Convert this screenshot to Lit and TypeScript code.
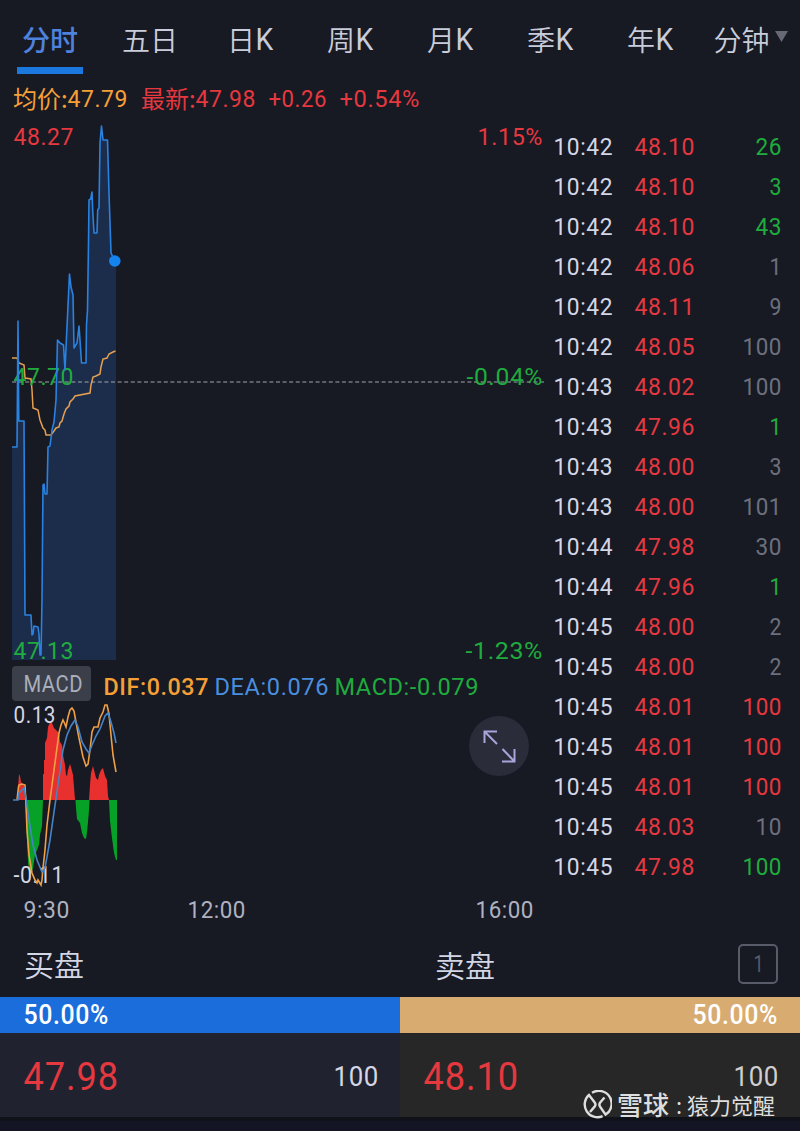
import { LitElement, html, svg, css } from "lit";
import { customElement, property } from "lit/decorators.js";

const CAP = 0.711;

/** Condensed numeric label whose box equals the visible glyph box. */
@customElement("din-text")
class DinText extends LitElement {
  @property() text = "";
  @property({ type: Number }) w = 0;
  @property({ type: Number }) cap = 17.5;
  @property({ type: Number }) weight = 450;

  static styles = css`
    :host { display: block; flex: none; }
    svg { display: block; overflow: visible; }
    text { font-family: Roboto, "Liberation Sans", sans-serif; fill: currentColor; letter-spacing: 0.025em; }
  `;

  render() {
    return html`<svg width=${this.w} height=${this.cap}>
      ${svg`<text x="-0.5" y=${this.cap} font-size=${this.cap / CAP} font-weight=${this.weight}
        textLength=${this.w + 1.5} lengthAdjust="spacingAndGlyphs">${this.text}</text>`}
    </svg>`;
  }
}

const label = (x: number, y: number, w: number, cls: string, text: string, size = 24.6) =>
  svg`<text class=${"lbl " + cls} x=${x - 0.5} y=${y} font-size=${size} textLength=${w + 1.5}
    lengthAdjust="spacingAndGlyphs">${text}</text>`;

const PRICE =
  "12,447 17,447 18,321 18.8,421 24,421 25,615 31,615 32,635 33,634 34,626 38,627 39,634 40,655 41,655 42,600 43,485 44,484 45,494 47,494 48,447 50,446 52,430 54,422 56,400 57.5,340 60,343 63.5,345 65,370 66.5,337 69.5,274 71,287 73,295 74,348 77,343 79,326 80,340 81.5,363 86,363 86.5,325 87.5,310 88.5,243 89,200 90.7,199 92,192 92.7,210 94,233 97,233 97.7,210 99,208 100,143 101.5,126 103,140 107.5,140 109,193 111,253 115,261";
const AVERAGE =
  "12,358 17,358 19,363 24,365 25,378 31,379 32,390 33,408 38,410 40,420 43,428 45,430 46,435 51,435 54,431 56,428 59,427 60,423 62,421 64,414 66,409 69,406 70,402 73,399 75,396 90,393 91,385 93,377 96,376 100,374 101,367 103,359 107,358 109,354 113,352 115.5,351";
const DIF =
  "17,800 18.5,787 19,785 22,784 25,785 26,805 27,830 29,855 32,873 35,880 37,883 38,880 41,885 42,880 43,868 45,850 47,825 50,800 54,770 59,733 61,725 63,720 64,722 66,727 68,717 70,710 72,708 74,711 76,722 79,738 83,757 86,766 88,764 90,750 92,732 94,727 98,727 100,718 103,712 105,705 107,705 109,714 111,735 113,755 116,772";
const DEA =
  "13,800 18,800 19,793 24,788 26,798 29,820 33,845 37,860 42,872 45,868 50,840 54,812 59,778 63,750 67,735 71,726 75,720 78,727 82,742 86,749 89,753 92,745 96,736 100,729 105,716 108,713 111,722 114,733 116,743";
const RISING = [
  "18,800 18,789 19,774 20,776 21,782 24,786 25,800",
  "43,800 43,774 44,774 44,760 45,760 45,743 47,738 48,727 50,722 52,723 54,728 56,730 59,733 60,742 62,745 63,755 65,765 66,775 67,776 68,770 70,764 71,767 73,775 74,787 75,800",
  "89,800 90,785 91,773 93,766 94,770 96,778 98,780 99,775 101,770 103,768 105,776 107,780 108,796 109,800",
];
const FALLING = [
  "25.5,800 26,815 27,840 28,862 29,872 31,874 33,868 35,855 37,850 39,845 40,835 42,826 43,800",
  "75.5,800 76,808 77,819 80,823 82,833 84,838 86,839 87,832 88,822 89,810 89.5,800",
  "109,800 110,821 112,838 114,853 116,860 117,860 117,800",
];

const TRADES: [string, string, string, string][] = [
  ["10:42", "48.10", "26", "green"],
  ["10:42", "48.10", "3", "green"],
  ["10:42", "48.10", "43", "green"],
  ["10:42", "48.06", "1", "grey"],
  ["10:42", "48.11", "9", "grey"],
  ["10:42", "48.05", "100", "grey"],
  ["10:43", "48.02", "100", "grey"],
  ["10:43", "47.96", "1", "green"],
  ["10:43", "48.00", "3", "grey"],
  ["10:43", "48.00", "101", "grey"],
  ["10:44", "47.98", "30", "grey"],
  ["10:44", "47.96", "1", "green"],
  ["10:45", "48.00", "2", "grey"],
  ["10:45", "48.00", "2", "grey"],
  ["10:45", "48.01", "100", "red"],
  ["10:45", "48.01", "100", "red"],
  ["10:45", "48.01", "100", "red"],
  ["10:45", "48.03", "10", "grey"],
  ["10:45", "47.98", "100", "green"],
];
const VOLUME_WIDTH = [0, 11, 25, 38];

@customElement("app-root")
class AppRoot extends LitElement {
  static styles = css`
    :host {
      display: flex; flex-direction: column; position: relative; box-sizing: border-box;
      width: 800px; height: 1131px; overflow: hidden; background: #171923; color: #d3d6e4;
      font-family: "Noto Sans CJK SC", sans-serif;
    }
    .red { color: #e5383f; fill: #e5383f; }
    .green { color: #1fac3e; fill: #1fac3e; }
    .grey { color: #6c707c; fill: #6c707c; }
    .orange { color: #f5a036; fill: #f5a036; }
    .blue { color: #4a8ede; fill: #4a8ede; }
    .white { fill: #d3d6e4; }

    .tabs { display: grid; grid-template-columns: repeat(8, 100px); height: 74px; flex: none; }
    .tab {
      display: flex; flex-direction: column; align-items: center; justify-content: space-between;
      font-size: 28px; line-height: 40px; font-weight: 350; padding-top: 19px; color: #c9ccda;
    }
    .tab .row { display: flex; align-items: center; }
    .tab din-text { margin: 0 0 1px 1px; }
    .tab.active { color: #4d82dd; font-weight: 500; }
    .line { width: 66px; height: 7px; background: #1a78de; }
    .more { margin-right: -1px; }
    .arrow { width: 13px; height: 11px; fill: #666975; margin: 0 0 5px 5px; display: block; }

    .quote { display: flex; align-items: center; height: 42px; flex: none; padding: 6px 0 0 13px; box-sizing: border-box; }
    .quote .item { display: flex; align-items: center; height: 42px; margin-right: 14px; }
    .quote .cjk { font-size: 24px; line-height: 42px; width: 55px; font-weight: 400; white-space: nowrap; }

    .main { display: grid; grid-template-columns: 544px 1fr; height: 814px; flex: none; }
    .charts { display: flex; flex-direction: column; position: relative; }
    .charts svg { display: block; flex: none; overflow: visible; }
    .lbl { font-family: Roboto, "Liberation Sans", sans-serif; font-weight: 450; letter-spacing: 0.025em; }
    .indicator { display: flex; align-items: center; height: 42px; padding-left: 12px; flex: none; }
    .chip {
      display: flex; align-items: center; justify-content: center; width: 79px; height: 35px;
      border-radius: 4px; background: #3b3f4a; color: #a9aebb; margin: 0 13px 0 0;
      padding-left: 2px; box-sizing: border-box;
    }
    .indicator .v { margin: 6px 7px 0 0; }
    .axis { display: flex; padding: 10px 0 0 24px; color: #aeb1c0; }
    .axis .noon { margin-left: 119px; }
    .axis .close { margin-left: 231px; }
    .expand { position: absolute; left: 469px; top: 600px; width: 60px; height: 60px; }

    .trades { display: flex; flex-direction: column; padding: 10px 19px 0 10px; }
    .trade { display: flex; align-items: center; height: 40px; }
    .trade .price { margin-left: 23px; }
    .trade .vol { margin-left: auto; }

    .book { display: flex; align-items: center; height: 67px; flex: none; font-size: 30px; font-weight: 350; padding: 0 22px 0 24px; }
    .book .half { width: 411px; line-height: 67px; }
    .level {
      display: flex; align-items: center; justify-content: center; box-sizing: border-box; width: 40px; height: 40px;
      margin-left: auto; border: 2px solid #585c69; border-radius: 5px; color: #585c69;
    }
    .ratio { display: grid; grid-template-columns: 1fr 1fr; height: 36px; flex: none; }
    .ratio div { display: flex; align-items: center; padding: 0 23px 1px 24px; color: #fff; }
    .ratio .buy { background: #1b6ddb; }
    .ratio .sell { background: #d8ab70; justify-content: flex-end; }
    .best { display: grid; grid-template-columns: 1fr 1fr; height: 84px; flex: none; border-bottom: 4px solid #10121a; }
    .best div { display: flex; align-items: center; justify-content: space-between; padding: 2px 22px 0 24px; }
    .best .buy { background: #20222f; }
    .best .sell { background: #272727; color: #cfcfcf; }
    .foot { flex: 1; background: #131424; }
    .mark { position: absolute; left: 583px; top: 1087px; display: flex; align-items: center; height: 34px; color: #dedede; line-height: 34px; white-space: nowrap; }
    .mark svg { width: 29px; height: 29px; margin: 1px 5px 0 0; }
    .mark .brand { font-size: 26px; font-weight: 500; width: 54px; }
    .mark .colon { width: 16px; text-align: center; font-size: 22px; }
    .mark .author { font-size: 22px; font-weight: 400; }
  `;

  private tab(name: string) {
    return html`<div class="tab"><div class="row"><span>${name}</span><din-text text="K" w="17" cap="22" weight="400"></din-text></div></div>`;
  }

  render() {
    return html`
      <div class="tabs">
        <div class="tab active"><span>分时</span><div class="line"></div></div>
        <div class="tab"><span>五日</span></div>
        ${["日", "周", "月", "季", "年"].map((n) => this.tab(n))}
        <div class="tab"><div class="row more"><span>分钟</span>
          <svg class="arrow" viewBox="0 0 13 11"><path d="M0 0H13L6.5 11Z" /></svg></div></div>
      </div>

      <div class="quote">
        <div class="item orange"><span class="cjk">均价:</span><din-text text="47.79" w="59"></din-text></div>
        <div class="item red"><span class="cjk">最新:</span><din-text text="47.98" w="59"></din-text></div>
        <div class="item red"><din-text text="+0.26" w="57"></din-text></div>
        <div class="item red"><din-text text="+0.54%" w="79"></din-text></div>
      </div>

      <div class="main">
        <div class="charts">
          <svg width="544" height="546" viewBox="0 116 544 546">
            <polygon points=${PRICE + " 116,261 116,660 12,660"} fill="#1c2c4b" />
            <line x1="12" x2="544" y1="382" y2="382" stroke="#a3a6ae" stroke-width="1" stroke-dasharray="4 2.6" />
            <polyline points=${AVERAGE} fill="none" stroke="#e5a050" stroke-width="1.5" />
            ${label(14, 144.5, 59, "red", "48.27")} ${label(478, 144.5, 64, "red", "1.15%")}
            ${label(14, 384.5, 59, "green", "47.70")} ${label(467, 384.5, 75, "green", "-0.04%")}
            ${label(14, 658.5, 59, "green", "47.13")} ${label(466, 658.5, 76, "green", "-1.23%")}
            <polyline points=${PRICE} fill="none" stroke="#2a82e0" stroke-width="1.6" stroke-linejoin="round" />
            <circle cx="114.8" cy="261" r="5.8" fill="#1583ee" />
          </svg>
          <div class="indicator">
            <div class="chip"><din-text text="MACD" w="58" cap="16.5"></din-text></div>
            <din-text class="v orange" text="DIF:0.037" w="104" weight="500"></din-text>
            <din-text class="v blue" text="DEA:0.076" w="113"></din-text>
            <din-text class="v green" text="MACD:-0.079" w="143"></din-text>
          </div>
          <svg width="544" height="186" viewBox="0 704 544 186">
            ${RISING.map((p) => svg`<polygon points=${p} fill="#e8302f" />`)}
            ${FALLING.map((p) => svg`<polygon points=${p} fill="#08a127" />`)}
            ${label(14, 723, 41, "white", "0.13", 23)}
            ${label(14, 883, 49, "white", "-0.11", 23)}
            <polyline points=${DIF} fill="none" stroke="#f0a044" stroke-width="1.6" />
            <polyline points=${DEA} fill="none" stroke="#4684c6" stroke-width="1.6" />
          </svg>
          <div class="axis">
            <din-text text="9:30" w="45"></din-text>
            <din-text class="noon" text="12:00" w="57"></din-text>
            <din-text class="close" text="16:00" w="57"></din-text>
          </div>
          <svg class="expand" viewBox="469 716 60 60">
            <circle cx="499" cy="746" r="30" fill="#2a2c39" />
            <path d="M497 744L484.5 731.5M497 731.5H484.5V743M502.5 749L514.5 761.5M502 761.5H514.5V749" fill="none" stroke="#a9a4dc" stroke-width="2" />
          </svg>
        </div>
        <div class="trades">
          ${TRADES.map(
            ([t, p, v, c]) => html`<div class="trade">
              <din-text text=${t} w="58"></din-text>
              <din-text class="price red" text=${p} w="59"></din-text>
              <din-text class="vol ${c}" text=${v} w=${VOLUME_WIDTH[v.length]}></din-text>
            </div>`
          )}
        </div>
      </div>

      <div class="book">
        <span class="half">买盘</span><span>卖盘</span>
        <div class="level"><din-text text="1" w="9" cap="17"></din-text></div>
      </div>
      <div class="ratio">
        <div class="buy"><din-text text="50.00%" w="84" cap="19" weight="500"></din-text></div>
        <div class="sell"><din-text text="50.00%" w="84" cap="19" weight="500"></din-text></div>
      </div>
      <div class="best">
        <div class="buy"><din-text class="red" text="47.98" w="94" cap="28"></din-text><din-text text="100" w="44" cap="20"></din-text></div>
        <div class="sell"><din-text class="red" text="48.10" w="94" cap="28"></din-text><din-text text="100" w="44" cap="20"></din-text></div>
      </div>
      <div class="foot"></div>
      <div class="mark">
        <svg viewBox="0 0 29 29" fill="none" stroke="currentColor" stroke-width="2.4">
          <path d="M9 2.8A12.8 12.8 0 0 1 22.6 24.6L17.3 17Q15.6 14.6 17.2 12.6L21.5 7.5" />
          <path d="M19.6 26.2A12.8 12.8 0 0 1 6 4.9L11.7 12.4Q13.2 14.4 11.8 16.4L7 22" />
        </svg>
        <span class="brand">雪球</span><span class="colon">:</span><span class="author">猿力觉醒</span>
      </div>
    `;
  }
}
